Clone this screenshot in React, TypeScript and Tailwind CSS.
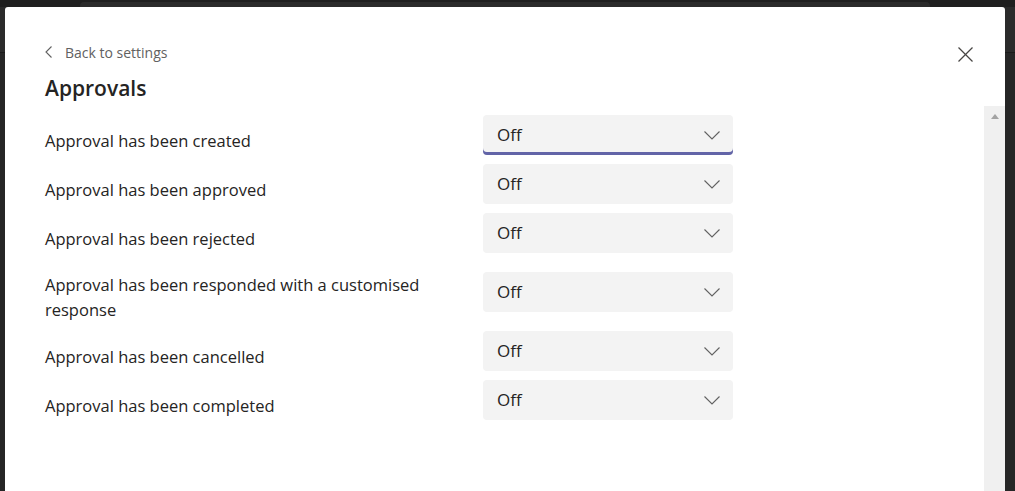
import React from 'react';

type Row = { label: string; focused?: boolean };

const rows: Row[] = [
  { label: 'Approval has been created', focused: true },
  { label: 'Approval has been approved' },
  { label: 'Approval has been rejected' },
  { label: 'Approval has been responded with a customised response' },
  { label: 'Approval has been cancelled' },
  { label: 'Approval has been completed' },
];

function ChevronDown() {
  return (
    <svg width="16" height="9" viewBox="0 0 16 9" fill="none">
      <polyline points="0.5,0.5 8,8 15.5,0.5" stroke="#616161" strokeWidth="1.1" />
    </svg>
  );
}

function Dropdown({ focused }: { focused?: boolean }) {
  return (
    <div
      className={
        'w-[250px] h-10 flex-none flex items-center justify-between pl-[14px] pr-[13px] bg-[#f3f3f3] rounded-[4px] ' +
        (focused ? 'shadow-[inset_0_-3px_0_#6264a7]' : '')
      }
    >
      <span className="text-[17px] text-[#252423]">Off</span>
      <ChevronDown />
    </div>
  );
}

export default function App() {
  return (
    <div className="relative w-[1015px] h-[491px] overflow-hidden bg-[#1f1f1f] font-['Open_Sans',sans-serif]">
      {/* app behind the dialog */}
      <div className="h-[5px] bg-[#2b2b2b] ml-[80px] mr-[85px] mt-[2px] rounded-t-[4px]" />
      <div className="h-[45px] bg-[#2b2b2b]" />
      <div className="h-[439px] bg-[#262626] border-t border-[#1a1a1a]" />

      {/* dialog */}
      <div className="absolute left-[5px] top-[7px] w-[1000px] h-[484px] bg-white rounded-t-[3px] flex flex-col">
        {/* header */}
        <div className="h-[99px] flex-none flex justify-between">
          <div className="pl-[40px] pt-[35px]">
            <div className="flex items-center h-5 text-[14px] text-[#616161]">
              <svg width="8" height="12" viewBox="0 0 8 12" fill="none" className="mr-[12px]">
                <polyline points="6.5,0.5 1,6 6.5,11.5" stroke="#616161" strokeWidth="1.1" />
              </svg>
              Back to settings
            </div>
            <h1 className="mt-[12px] text-[21px] leading-[28px] font-semibold text-[#252423]">Approvals</h1>
          </div>
          <div className="pt-[40px] pr-[32px]">
            <svg width="15" height="15" viewBox="0 0 15 15" fill="none">
              <line x1="0.5" y1="0.5" x2="14.5" y2="14.5" stroke="#484644" strokeWidth="1.3" />
              <line x1="14.5" y1="0.5" x2="0.5" y2="14.5" stroke="#484644" strokeWidth="1.3" />
            </svg>
          </div>
        </div>

        {/* body */}
        <div className="flex-1 flex min-h-0">
          <div className="flex-1 pl-[40px] pt-[9px] flex flex-col gap-[9px]">
            {rows.map(r => (
              <div key={r.label} className="flex items-center">
                <div className="w-[438px] flex-none pr-[20px] pt-[10px] text-[16.5px] leading-[25px] text-[#252423]">
                  {r.label}
                </div>
                <Dropdown focused={r.focused} />
              </div>
            ))}
          </div>

          {/* scrollbar */}
          <div className="w-[21px] flex-none bg-[#f0f0f0] flex justify-center pt-[8px]">
            <div className="w-0 h-0 border-l-[4px] border-r-[4px] border-b-[5px] border-l-transparent border-r-transparent border-b-[#a3a3a3]" />
          </div>
        </div>
      </div>
    </div>
  );
}
